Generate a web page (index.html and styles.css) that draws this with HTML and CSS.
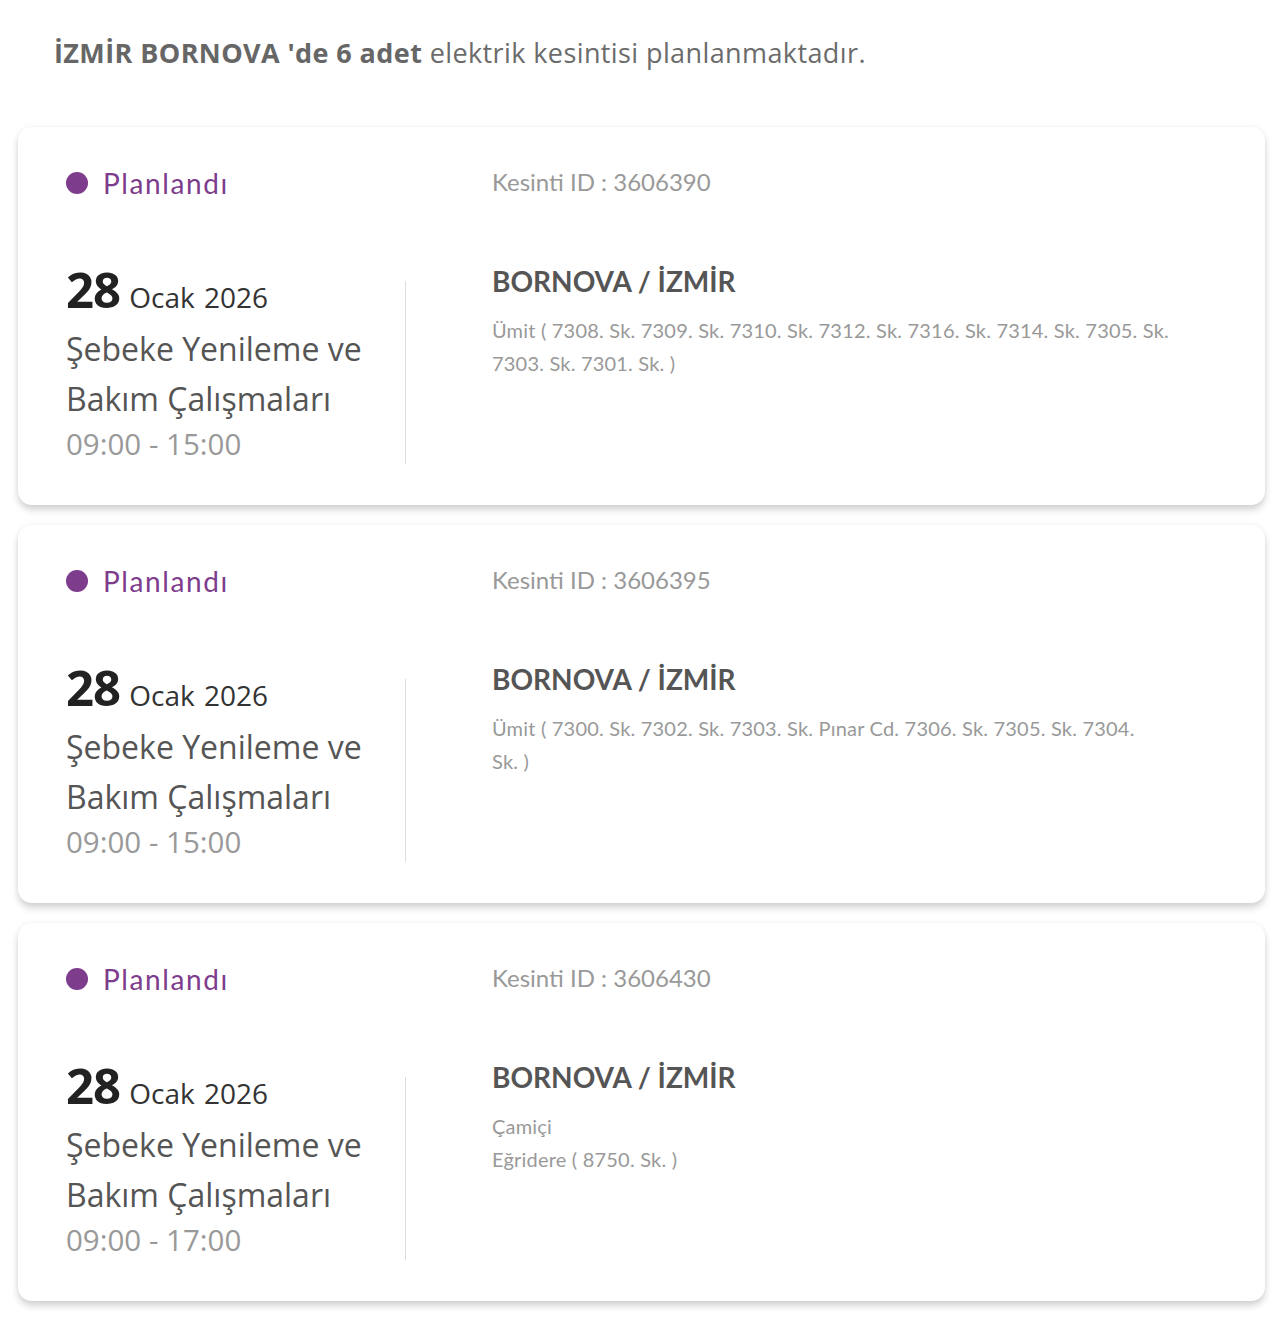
FILE: index.html
```html
<!DOCTYPE html>
<html lang="tr">

<head>
  <meta charset="UTF-8">
  <meta name="viewport" content="width=device-width, initial-scale=1.0">
  <title>Planlı Kesintiler</title>
  <link rel="stylesheet" href="styles.css">
</head>

<body>
  <p class="summary"><b>İZMİR BORNOVA 'de 6 adet</b> elektrik kesintisi planlanmaktadır.</p>

  <div class="outage-list">
    <div class="outage-card">
      <div class="card-top">
        <div class="status"><span class="status-dot"></span>Planlandı</div>
        <div class="outage-id">Kesinti ID : 3606390</div>
      </div>
      <div class="card-body">
        <div class="when">
          <div class="date"><span class="day">28</span> Ocak 2026</div>
          <div class="reason">Şebeke Yenileme ve Bakım Çalışmaları</div>
          <div class="hours">09:00 - 15:00</div>
        </div>
        <div class="divider"></div>
        <div class="where">
          <div class="place">BORNOVA / İZMİR</div>
          <div class="streets">Ümit ( 7308. Sk. 7309. Sk. 7310. Sk. 7312. Sk. 7316. Sk. 7314. Sk. 7305. Sk. 7303. Sk. 7301. Sk.&nbsp;)</div>
        </div>
      </div>
    </div>

    <div class="outage-card">
      <div class="card-top">
        <div class="status"><span class="status-dot"></span>Planlandı</div>
        <div class="outage-id">Kesinti ID : 3606395</div>
      </div>
      <div class="card-body">
        <div class="when">
          <div class="date"><span class="day">28</span> Ocak 2026</div>
          <div class="reason">Şebeke Yenileme ve Bakım Çalışmaları</div>
          <div class="hours">09:00 - 15:00</div>
        </div>
        <div class="divider"></div>
        <div class="where">
          <div class="place">BORNOVA / İZMİR</div>
          <div class="streets">Ümit ( 7300. Sk. 7302. Sk. 7303. Sk. Pınar Cd. 7306. Sk. 7305. Sk. 7304. Sk.&nbsp;)</div>
        </div>
      </div>
    </div>

    <div class="outage-card">
      <div class="card-top">
        <div class="status"><span class="status-dot"></span>Planlandı</div>
        <div class="outage-id">Kesinti ID : 3606430</div>
      </div>
      <div class="card-body">
        <div class="when">
          <div class="date"><span class="day">28</span> Ocak 2026</div>
          <div class="reason">Şebeke Yenileme ve Bakım Çalışmaları</div>
          <div class="hours">09:00 - 17:00</div>
        </div>
        <div class="divider"></div>
        <div class="where">
          <div class="place">BORNOVA / İZMİR</div>
          <div class="streets">Çamiçi</div>
          <div class="streets">Eğridere ( 8750. Sk.&nbsp;)</div>
        </div>
      </div>
    </div>
  </div>
</body>

</html>
```

FILE: styles.css
```css
body {
  margin: 0;
  padding: 0 15px 18px 18px;
  background: #fff;
  font-family: 'Lato', 'Noto Sans', sans-serif;
  color: #666;
}

.summary {
  margin: 0;
  padding: 36px 0 0 36px;
  height: 91px;
  box-sizing: border-box;
  font-family: 'Open Sans', 'Lato', sans-serif;
  font-size: 27px;
  line-height: 34px;
  letter-spacing: 0.4px;
  color: #6b6b6b;
}

.summary b {
  font-weight: 700;
  color: #666;
}

.outage-list {
  display: flex;
  flex-direction: column;
  gap: 20px;
  padding-top: 36px;
}

.outage-card {
  background: #fff;
  border-radius: 14px;
  box-shadow: 0 0 6px rgba(0, 0, 0, 0.05), 0 5px 7px rgba(0, 0, 0, 0.16);
  padding: 40px 40px 41px 48px;
  height: 378px;
  box-sizing: border-box;
}

.card-top {
  display: flex;
  align-items: center;
  height: 32px;
}

.status {
  width: 426px;
  display: flex;
  align-items: center;
  font-size: 28px;
  letter-spacing: 1.6px;
  color: #7d3c8c;
}

.status-dot {
  width: 22px;
  height: 22px;
  border-radius: 50%;
  background: #7d3c8c;
  margin-right: 15px;
}

.outage-id {
  font-size: 24px;
  color: #999;
  margin-top: -4px;
}

.card-body {
  display: flex;
  margin-top: 65px;
}

.when {
  width: 339px;
  font-family: 'Open Sans', 'Noto Sans', sans-serif;
}

.date {
  font-size: 28px;
  line-height: 50px;
  height: 60px;
  color: #333;
  word-spacing: 2px;
}

.day {
  font-size: 49px;
  font-weight: 700;
  color: #222;
  letter-spacing: -1px;
}

.reason {
  font-size: 32px;
  line-height: 50px;
  color: #555;
}

.hours {
  font-size: 29.5px;
  line-height: 40px;
  color: #999;
}

.divider {
  width: 1px;
  height: 183px;
  margin-top: 17px;
  background: #ddd;
}

.where {
  margin-left: 86px;
  width: 682px;
}

.place {
  font-size: 28px;
  line-height: 34px;
  font-weight: 700;
  color: #555;
  margin-bottom: 16px;
}

.streets {
  font-size: 20px;
  line-height: 33px;
  letter-spacing: 0.2px;
  color: #999;
}
```
